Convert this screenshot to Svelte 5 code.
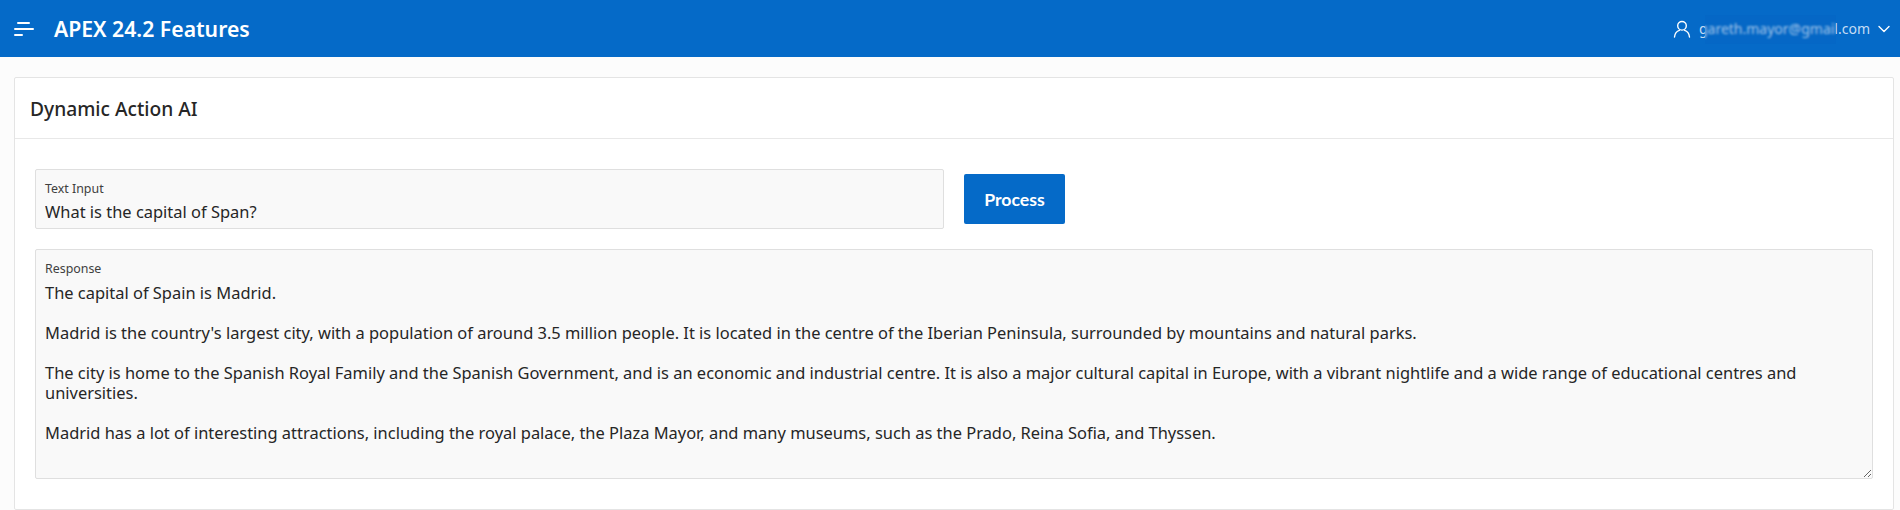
<script>
  let question = $state('What is the capital of Span?');
  let answer = $state(`The capital of Spain is Madrid.

Madrid is the country's largest city, with a population of around 3.5 million people. It is located in the centre of the Iberian Peninsula, surrounded by mountains and natural parks.

The city is home to the Spanish Royal Family and the Spanish Government, and is an economic and industrial centre. It is also a major cultural capital in Europe, with a vibrant nightlife and a wide range of educational centres and universities.

Madrid has a lot of interesting attractions, including the royal palace, the Plaza Mayor, and many museums, such as the Prado, Reina Sofia, and Thyssen.`);
</script>

<header class="topbar">
  <button class="menu" aria-label="Menu">
    <svg width="20" height="14" viewBox="0 0 20 14">
      <rect x="3" y="0" width="13" height="2" rx="1" fill="#fff" />
      <rect x="0" y="6" width="20" height="2" rx="1" fill="#fff" />
      <rect x="0" y="12" width="9" height="2" rx="1" fill="#fff" />
    </svg>
  </button>
  <span class="app-name">APEX 24.2 Features</span>
  <div class="user">
    <svg width="18" height="18" viewBox="0 0 18 18" fill="none" stroke="#fff" stroke-width="1.4" stroke-linecap="round">
      <circle cx="9" cy="5.8" r="4.3" />
      <path d="M1.5 17c.4-3.6 2.6-6 4.9-6.6M16.5 17c-.4-3.6-2.6-6-4.9-6.6" />
    </svg>
    <span class="email">gareth.mayor@gmail.com<span class="smear"></span></span>
    <svg width="12" height="8" viewBox="0 0 12 8" fill="none" stroke="#fff" stroke-width="1.4" stroke-linecap="round" stroke-linejoin="round">
      <path d="M1 1.5 6 6.5l5-5" />
    </svg>
  </div>
</header>

<main class="page">
  <section class="card">
    <h2 class="card-title">Dynamic Action AI</h2>
    <div class="card-body">
      <div class="row">
        <div class="field input-field">
          <label for="q">Text Input</label>
          <input id="q" type="text" bind:value={question} />
        </div>
        <button class="process">Process</button>
      </div>
      <div class="field">
        <label for="r">Response</label>
        <textarea id="r" bind:value={answer}></textarea>
      </div>
    </div>
  </section>
</main>

<style>
  :global(body) {
    margin: 0;
    background: #fcfcfc;
    font-family: "Noto Sans", "Open Sans", sans-serif;
    color: #262626;
    overflow: hidden;
  }

  .topbar {
    height: 57px;
    background: #056ac8;
    display: flex;
    align-items: center;
    color: #fff;
  }

  .menu {
    background: none;
    border: 0;
    padding: 0;
    margin-left: 14px;
    width: 20px;
    height: 14px;
    display: flex;
  }

  .app-name {
    margin-left: 20px;
    font-size: 21.2px;
    font-weight: 600;
  }

  .user {
    margin-left: auto;
    margin-right: 10px;
    display: flex;
    align-items: center;
    gap: 8px;
  }

  .email {
    position: relative;
    font-size: 14px;
    color: #c4dcf4;
  }

  .smear {
    position: absolute;
    left: 6px;
    right: 34px;
    top: -4px;
    bottom: -6px;
    backdrop-filter: blur(1px);
    background: rgba(5, 96, 190, 0.2);
  }

  .page {
    padding: 20px 6px 0 14px;
  }

  .card {
    background: #fff;
    border: 1px solid #e4e4e4;
    border-radius: 2px;
  }

  .card-title {
    margin: 0;
    height: 60px;
    padding: 0 15px;
    display: flex;
    align-items: center;
    font-size: 19.2px;
    font-weight: 500;
    color: #262626;
    border-bottom: 1px solid #e8e8e8;
  }

  .card-body {
    padding: 30px 20px 30px 20px;
    display: flex;
    flex-direction: column;
    gap: 20px;
  }

  .row {
    display: flex;
    align-items: center;
    gap: 20px;
  }

  .field {
    background: #f9f9f9;
    border: 1px solid #dfdfdf;
    border-radius: 2px;
    display: flex;
    flex-direction: column;
  }

  .input-field {
    width: 907px;
    height: 58px;
  }

  label {
    padding: 11px 9px 0;
    font-size: 12.4px;
    line-height: 16px;
    color: #404040;
  }

  input,
  textarea {
    display: block;
    border: 0;
    outline: 0;
    background: transparent;
    padding: 0 9px;
    margin: 0;
    font: inherit;
    font-size: 16.45px;
    line-height: 20px;
    color: #262626;
  }

  input {
    height: 24px;
    margin-top: 2px;
  }

  textarea {
    box-sizing: border-box;
    width: 100%;
    height: 201px;
    padding-top: 6px;
    resize: vertical;
  }

  .process {
    width: 101px;
    height: 50px;
    background: #056ac8;
    border: 0;
    border-radius: 2px;
    color: #fff;
    font-family: Lato, sans-serif;
    font-size: 17.7px;
    font-weight: 700;
  }
</style>
